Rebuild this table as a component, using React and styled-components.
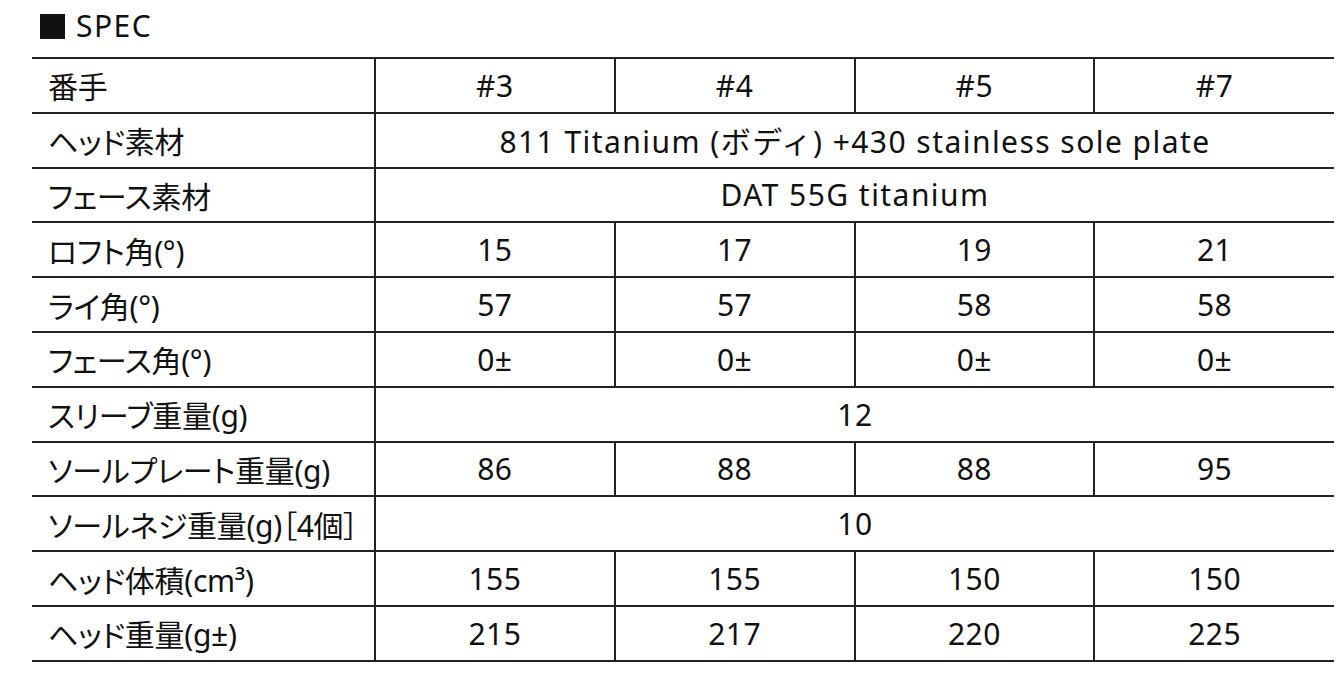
import React from "react";
import styled, { createGlobalStyle } from "styled-components";

const Global = createGlobalStyle`
  html, body { margin: 0; padding: 0; background: #fff; }
  body {
    font-family: "Noto Sans", "Noto Sans CJK JP", sans-serif;
    color: #111;
  }
`;

const Page = styled.div`
  padding: 0 3px 0 32px;
  display: flex;
  flex-direction: column;
`;

const Title = styled.h2`
  box-sizing: border-box;
  margin: 0 0 0 8px;
  padding-bottom: 5px;
  font-size: 30px;
  font-weight: 400;
  line-height: 40px;
  height: 57px;
  display: flex;
  align-items: center;
  gap: 11px;
  letter-spacing: 1.5px;
`;

const Square = styled.span`
  display: inline-block;
  width: 25px;
  height: 25px;
  background: #111;
`;

const Table = styled.table`
  width: 1302px;
  border-collapse: collapse;
  table-layout: fixed;
  font-size: 30px;
`;

const Row = styled.tr`
  height: 54.8px;
  border-top: 2px solid #222;
  border-bottom: 2px solid #222;
`;

const Label = styled.th`
  text-align: left;
  font-weight: 400;
  padding: 0 0 0 16px;
  border-right: 2px solid #222;
  white-space: nowrap;
  font-feature-settings: "palt";
  letter-spacing: -0.3px;
`;

const Cell = styled.td`
  text-align: center;
  padding: 0;
  border-left: 2px solid #222;
  white-space: nowrap;
  letter-spacing: ${(p) => (p.$text ? "1.45px" : "0.5px")};
`;

const cols = ["#3", "#4", "#5", "#7"];

const rows = [
  ["番手", cols],
  ["ヘッド素材", ["811 Titanium (ボディ) +430 stainless sole plate"]],
  ["フェース素材", ["DAT 55G titanium"]],
  ["ロフト角(°)", ["15", "17", "19", "21"]],
  ["ライ角(°)", ["57", "57", "58", "58"]],
  ["フェース角(°)", ["0±", "0±", "0±", "0±"]],
  ["スリーブ重量(g)", ["12"]],
  ["ソールプレート重量(g)", ["86", "88", "88", "95"]],
  ["ソールネジ重量(g)［4個］", ["10"]],
  ["ヘッド体積(cm³)", ["155", "155", "150", "150"]],
  ["ヘッド重量(g±)", ["215", "217", "220", "225"]],
];

const isText = (v) => /[a-z]/i.test(v);

export default function App() {
  return (
    <>
      <Global />
      <Page>
        <Title>
          <Square />
          SPEC
        </Title>
        <Table>
          <colgroup>
            <col style={{ width: "343px" }} />
            <col />
            <col />
            <col />
            <col />
          </colgroup>
          <tbody>
            {rows.map(([label, vals]) => (
              <Row key={label}>
                <Label>{label}</Label>
                {vals.length === 1 ? (
                  <Cell colSpan={4} $text={isText(vals[0])}>
                    {vals[0]}
                  </Cell>
                ) : (
                  vals.map((v, i) => (
                    <Cell key={i} $text={isText(v)}>
                      {v}
                    </Cell>
                  ))
                )}
              </Row>
            ))}
          </tbody>
        </Table>
      </Page>
    </>
  );
}
